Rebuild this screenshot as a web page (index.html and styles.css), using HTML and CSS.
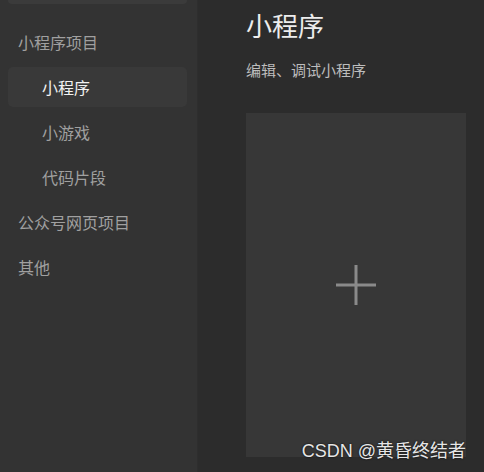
FILE: index.html
```html
<!DOCTYPE html>
<html lang="zh-CN">

<head>
    <meta charset="UTF-8" />
    <title>新建项目</title>
    <link rel="stylesheet" href="styles.css">
</head>

<body>
    <div class="layout">
        <!-- Left menu -->
        <aside class="sidebar">
            <div class="search"></div>
            <ul class="menu">
                <li class="group">小程序项目</li>
                <li class="sub active">小程序</li>
                <li class="sub">小游戏</li>
                <li class="sub">代码片段</li>
                <li class="group">公众号网页项目</li>
                <li class="group">其他</li>
            </ul>
        </aside>

        <!-- Main panel -->
        <main class="content">
            <h1 class="title">小程序</h1>
            <p class="desc">编辑、调试小程序</p>
            <div class="new-card">
                <svg class="plus" width="40" height="40" viewBox="0 0 40 40">
                    <path d="M20 0V40M0 20H40" stroke="#8a8a8a" stroke-width="3" fill="none" />
                </svg>
            </div>
        </main>
    </div>

    <div class="watermark">CSDN @黄昏终结者</div>
</body>

</html>
```

FILE: styles.css
```css
html,
body {
    margin: 0;
    padding: 0;
    height: 100%;
    overflow: hidden;
    font-family: 'Noto Sans CJK SC', 'Noto Sans', sans-serif;
    background: #2c2c2c;
}

* {
    box-sizing: border-box;
}

.layout {
    display: flex;
    height: 100%;
}

/* Sidebar */
.sidebar {
    width: 198px;
    flex-shrink: 0;
    background: #333333;
    border-right: 1px solid #2e2e2e;
    padding: 0 10px 0 8px;
}

.search {
    height: 4px;
    background: #3b3b3b;
    border-radius: 0 0 5px 5px;
}

.menu {
    list-style: none;
    margin: 0;
    padding: 18px 0 0 0;
}

.menu li {
    height: 40px;
    line-height: 40px;
    margin-bottom: 5px;
    font-size: 16px;
    color: #a0a0a0;
    border-radius: 5px;
}

.menu .group {
    padding-left: 10px;
}

.menu .sub {
    padding-left: 34px;
}

.menu .active {
    background: #393939;
    color: #f2f2f2;
}

/* Main */
.content {
    flex: 1;
    padding: 0 0 0 48px;
}

.title {
    margin: 7px 0 0 0;
    font-size: 26px;
    font-weight: normal;
    line-height: 36px;
    color: #ededed;
}

.desc {
    margin: 17px 0 0 0;
    font-size: 15px;
    line-height: 20px;
    color: #bdbdbd;
}

.new-card {
    margin-top: 33px;
    width: 220px;
    height: 344px;
    background: #373737;
    display: flex;
    align-items: center;
    justify-content: center;
}

.watermark {
    position: absolute;
    right: 18px;
    bottom: 10px;
    font-family: 'Liberation Sans', 'Noto Sans CJK SC', sans-serif;
    font-size: 18px;
    color: #e6e6e6;
    text-shadow: 0 0 2px #000;
}
```
